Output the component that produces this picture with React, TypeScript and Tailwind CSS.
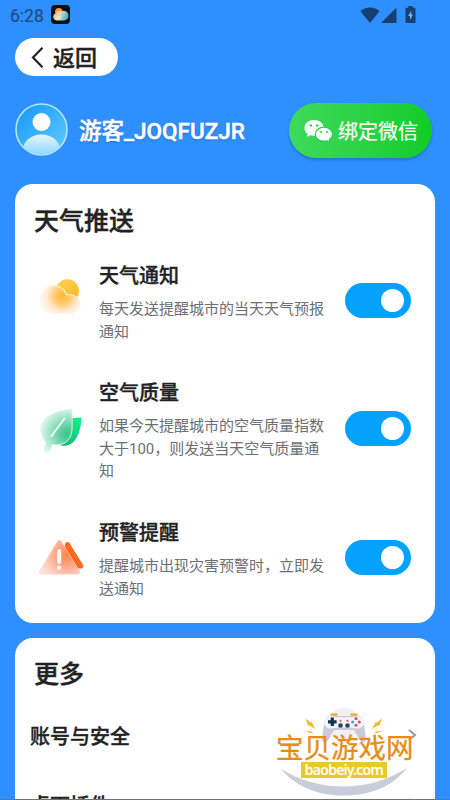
import { useState } from 'react';
import type { ReactNode } from 'react';

const FONT = "font-[Roboto,'Noto_Sans_CJK_SC',sans-serif]";

function AppIcon() {
  return (
    <svg className="ml-[7px] h-[19px] w-[19px]" viewBox="0 0 19 19">
      <defs>
        <linearGradient id="app-cloud" x1="0" y1="0" x2="1" y2="0.3">
          <stop offset="0" stopColor="#fbb978" />
          <stop offset="0.5" stopColor="#e3d8b8" />
          <stop offset="1" stopColor="#4fb9cf" />
        </linearGradient>
      </defs>
      <rect width="19" height="19" rx="4" fill="#0b1013" />
      <circle cx="7.8" cy="6.8" r="3.8" fill="#f79a35" />
      <path d="M5.5 15.5a3.6 3.6 0 0 1-.8-7 4.2 4.2 0 0 1 6-2.3A4.8 4.8 0 0 1 17.5 10.5a4.7 4.7 0 0 1-4.7 5Z" fill="url(#app-cloud)" />
      <path d="M4 12.5c2-2 4 0 6-2.5l1 4.5H6Z" fill="#fff" opacity=".35" />
    </svg>
  );
}

function StatusBar() {
  return (
    <div className="flex h-[38px] items-start pt-[5px] pr-[34px] pl-[10px] text-[#1d4c86]">
      <span className="mt-[1px] w-[34px] text-[17.5px] leading-5 [-webkit-text-stroke:0.2px]">6:28</span>
      <AppIcon />
      <div className="ml-auto flex items-start pt-[2px] text-[#173f70]">
        <svg className="h-4 w-5" viewBox="0 0 20 16" fill="currentColor">
          <path d="M10 16 .5 4.2C3.2 1.8 6.4.5 10 .5s6.8 1.3 9.5 3.7Z" />
        </svg>
        <svg className="ml-[1px] h-4 w-4" viewBox="0 0 16 16" fill="currentColor">
          <path d="M15.5.5V16H0Z" />
        </svg>
        <svg className="-mt-[1px] ml-2 h-[17px] w-[11px]" viewBox="0 0 11 17">
          <path d="M3.3 0h4.4v1.8h1.8c.6 0 1 .4 1 1V16c0 .6-.4 1-1 1h-8c-.6 0-1-.4-1-1V2.800c0-.6.4-1 1-1h1.800Z" fill="currentColor" />
          <path d="M6.200 4.800 3 10h2v4l3-5.500H6.200Z" fill="#72b4f5" />
        </svg>
      </div>
    </div>
  );
}

function Avatar() {
  return (
    <svg className="-mt-[2px] h-[53px] w-[53px]" viewBox="0 0 53 53">
      <defs>
        <linearGradient id="avatar-bg" x1="0.1" y1="0.1" x2="0.9" y2="0.9">
          <stop offset="0" stopColor="#1b9bf8" />
          <stop offset="1" stopColor="#5cc8ff" />
        </linearGradient>
        <linearGradient id="avatar-body" x1="0" y1="0" x2="0" y2="0.7">
          <stop offset="0" stopColor="#e6f6ff" />
          <stop offset="1" stopColor="#7fd2ff" />
        </linearGradient>
        <clipPath id="avatar-clip">
          <circle cx="26.5" cy="26.5" r="25" />
        </clipPath>
      </defs>
      <circle cx="26.5" cy="26.5" r="25.5" fill="url(#avatar-bg)" stroke="#b9e4ff" strokeWidth="1.6" />
      <ellipse cx="26.5" cy="48" rx="19" ry="16.5" fill="url(#avatar-body)" clipPath="url(#avatar-clip)" />
      <circle cx="26.5" cy="19" r="9" fill="#fff" />
    </svg>
  );
}

function WechatIcon() {
  return (
    <svg className="h-[24px] w-[29px]" viewBox="0 0 29 24">
      <path d="M10 1C4.5 1 .5 4.500.5 9c0 2.500 1.200 4.600 3.200 6l-.9 3 3.500-1.700c1.200.3 2.400.500 3.700.500 5.500 0 9.700-3.500 9.700-7.900S15.500 1 10 1Z" fill="#fff" />
      <path d="M20 8.200c-4.800 0-8.600 3-8.600 7s3.800 7 8.600 7c1.100 0 2.100-.2 3-.4l3 1.500-.8-2.600c2-1.300 3.300-3.200 3.300-5.500 0-4-3.700-7-8.500-7Z" fill="#fff" stroke="#2ad046" strokeWidth="1.2" />
      <circle cx="6.9" cy="6.5" r="1.3" fill="#2fd24c" />
      <circle cx="13.2" cy="6.5" r="1.3" fill="#2fd24c" />
      <circle cx="17.2" cy="13" r="1.1" fill="#2ad046" />
      <circle cx="23" cy="13" r="1.1" fill="#2ad046" />
    </svg>
  );
}

function WeatherIcon() {
  return (
    <svg className="h-[50px] w-[50px]" viewBox="0 0 50 50">
      <defs>
        <linearGradient id="sun" x1="0" y1="0" x2="1" y2="1">
          <stop offset="0" stopColor="#ffd550" />
          <stop offset="1" stopColor="#fbb52c" />
        </linearGradient>
        <radialGradient id="cloud" gradientUnits="userSpaceOnUse" cx="27.5" cy="21" r="21">
          <stop offset="0" stopColor="#ffb938" />
          <stop offset="0.35" stopColor="#ffc96a" />
          <stop offset="0.75" stopColor="#ffebd4" />
          <stop offset="1" stopColor="#fff6ec" />
        </radialGradient>
      </defs>
      <circle cx="32.3" cy="16" r="11.7" fill="url(#sun)" />
      <path d="M18 38.500C10 38.500 4.500 33 4.500 25.500S10.500 10.500 19 10.500c6 0 10.500 4 12.500 9.300 7-1 14 3.200 14 9.700 0 5-4.500 9-10 9Z" fill="url(#cloud)" />
      <path d="M14 11.300c8-2.300 15.500 2.200 17.500 8.500 5.500-.8 10.500 1.500 12.700 5" fill="none" stroke="#fff0cc" strokeWidth="1.1" />
    </svg>
  );
}

function LeafIcon() {
  return (
    <svg className="h-[50px] w-[50px]" viewBox="0 -3 50 50">
      <defs>
        <linearGradient id="leaf-back" x1="1" y1="0" x2="0.3" y2="1">
          <stop offset="0" stopColor="#10f48b" />
          <stop offset="1" stopColor="#1bb679" />
        </linearGradient>
        <radialGradient id="leaf-front" gradientUnits="userSpaceOnUse" cx="32" cy="27" r="27">
          <stop offset="0" stopColor="#35c48a" />
          <stop offset="0.4" stopColor="#72d7ac" />
          <stop offset="1" stopColor="#e2f8ef" />
        </radialGradient>
      </defs>
      <path d="M28 12.500c6-.5 12-2 18.700-2-.5 6-1.500 14-5 20-4 7.500-11 10.500-20 6.500Z" fill="url(#leaf-back)" />
      <path d="M36.500 2.500C22 3.500 6 9 6 23c0 5 2 9 5.200 11.800L9.500 42c-.5 3 4 4 5.200 1.500l2.600-6.300C26 40 36.500 35 37 23c.2-7 .5-13-.5-20.500Z" fill="url(#leaf-front)" stroke="#d0f5e5" strokeWidth="1" />
      <path d="M29.500 11.500 16.500 29" stroke="#edfff7" strokeWidth="1.9" strokeLinecap="round" />
    </svg>
  );
}

function AlertIcon() {
  return (
    <svg className="h-[50px] w-[50px]" viewBox="0 -2 50 50">
      <defs>
        <radialGradient id="alert-front" gradientUnits="userSpaceOnUse" cx="32" cy="21" r="30">
          <stop offset="0" stopColor="#fd8350" />
          <stop offset="0.4" stopColor="#fea98b" />
          <stop offset="0.75" stopColor="#fed0c0" />
          <stop offset="1" stopColor="#fee6df" />
        </radialGradient>
      </defs>
      <path d="M32.500 10.500 45.800 32H28Z" fill="#ff681f" stroke="#ff681f" strokeWidth="5" strokeLinejoin="round" />
      <path d="M24.300 8.500 42.500 38H6.800Z" fill="#ffd3c3" stroke="#ffd3c3" strokeWidth="5" strokeLinejoin="round" />
      <path d="M24.300 8.500 42.500 38H6.800Z" fill="url(#alert-front)" stroke="url(#alert-front)" strokeWidth="4" strokeLinejoin="round" />
      <path d="M24.200 17V28" stroke="#fff5f0" strokeWidth="4" strokeLinecap="round" />
      <circle cx="24.2" cy="33.7" r="2.3" fill="#fff5f0" />
    </svg>
  );
}

function Toggle() {
  const [on, setOn] = useState(true);

  return (
    <button
      onClick={() => setOn(!on)}
      className={`flex h-[35px] w-[66px] shrink-0 items-center rounded-full px-[7px] ${on ? 'justify-end bg-[#04a2fd]' : 'justify-start bg-gray-300'}`}
    >
      <span className="h-[23px] w-[23px] rounded-full bg-white" />
    </button>
  );
}

function PushRow({ icon, title, desc }: { icon: ReactNode; title: string; desc: string }) {
  return (
    <div className="flex items-center">
      <div className="w-[64px] shrink-0">{icon}</div>
      <div className="w-[228px] shrink-0 pt-[4px]">
        <h3 className="text-[20px] leading-[30px] font-medium text-[#222] [-webkit-text-stroke:0.35px]">{title}</h3>
        <p className="mt-[7px] text-[15px] leading-[22.5px] text-[#6b6f76]">{desc}</p>
      </div>
      <div className="ml-auto">
        <Toggle />
      </div>
    </div>
  );
}

function Watermark() {
  return (
    <div className="absolute top-[705px] left-[270px] h-[95px] w-[150px]">
      <svg className="absolute inset-0 h-full w-full" viewBox="0 0 150 95">
        <circle cx="74" cy="19" r="16.5" fill="#f1f1f3" />
        <path d="M11 64c38 23.500 88 23.500 126-1-16 20-38 27.500-64 27.500C48 90.500 26 82 11 64Z" fill="#c9ccda" />
        <g fill="#f0b62c">
          <path d="m35.500 13.500 5.500 4.500.5-1.500 3.500 7.500-6-4-.5 1.500Z" />
          <path d="m112 13.500-5.500 4.500-.5-1.500-4 7.500 6.500-4 .5 1.500Z" />
          <path d="m35 25.500 4.500 1 .5-.7 3.500 3-5-1.300Z" />
          <path d="m112.500 25.500-4.500 1-.5-.7-3.500 3 5-1.300Z" />
        </g>
        <path d="M60.500 9.700h7M80.500 9.700h7" stroke="#e8aa2a" strokeWidth="2.2" />
        <path d="M59 11h30c4 0 5.500 3 6 7l2 15c.5 5-4 5.500-6.500 2L84.500 25h-21L57.500 35c-2.500 3.500-7 3-6.500-2l2-15c.5-4 2-7 6-7Z" transform="translate(3.700 0) scale(.95 1)" fill="#c9cbd9" />
        <path d="M61 11.200c2.500 0 4 1 5.500 1h15c1.500 0 3-1 5.500-1 4 0 7 2.500 7 6s-3 6.300-7 6.300c-3 0-4.500-1-6.500-1h-13c-2 0-3.500 1-6.500 1-4 0-7-2.800-7-6.300s3-6 7-6Z" fill="#f5f4fa" />
        <path d="M62.300 12.500v8.600M58 16.800h8.600" stroke="#17334c" strokeWidth="3.2" />
        <circle cx="70.5" cy="20.5" r="2.3" fill="#25475d" />
        <circle cx="77.5" cy="20.5" r="2.3" fill="#25475d" />
        <circle cx="70.5" cy="15.8" r="1.1" fill="#e85569" />
        <circle cx="77.5" cy="15.8" r="1.1" fill="#e85569" />
        <circle cx="86" cy="13.6" r="1.5" fill="#e64554" />
        <circle cx="86" cy="20.2" r="1.5" fill="#e64554" />
        <circle cx="82.7" cy="16.9" r="1.5" fill="#39a7bd" />
        <circle cx="89.3" cy="16.9" r="1.5" fill="#e64554" />
      </svg>
      <div className="absolute top-[30px] left-[6px] text-[27.5px] leading-[28px] whitespace-nowrap text-[#e78b19] [-webkit-text-stroke:0.3px]">宝贝游戏网</div>
      <div className="absolute top-[57px] left-[31px] flex h-[16px] w-[86px] items-center justify-center bg-[#e9c92d] font-['Noto_Sans',sans-serif] text-[14px] leading-4 font-medium tracking-[-0.6px] text-white [-webkit-text-stroke:0.2px]">baobeiy.com</div>
    </div>
  );
}

export default function App() {
  return (
    <div className={`relative h-[800px] w-[450px] overflow-hidden bg-[#2e8fff] ${FONT}`}>
      <StatusBar />

      <div className="px-[15px]">
        <button className="flex h-[38px] w-[103px] items-center rounded-full bg-white pl-[16px] text-[#222]">
          <svg className="h-[21px] w-[13px]" viewBox="0 0 13 21" fill="none" stroke="currentColor" strokeWidth="2.2">
            <path d="M11.500.8 2 10.500l9.500 9.700" />
          </svg>
          <span className="mt-[3px] ml-[9px] text-[22px] leading-8 font-medium [-webkit-text-stroke:0.4px]">返回</span>
        </button>

        <div className="mt-[27px] flex h-[55px] items-center">
          <Avatar />
          <span className="ml-[11px] text-[22.5px] leading-8 font-medium text-white [-webkit-text-stroke:0.5px] [text-shadow:0_1px_2px_rgba(0,0,0,0.25)]">游客_JOQFUZJR</span>
          <button className="mr-[3px] ml-auto flex h-[55px] w-[143px] items-center rounded-full bg-linear-to-r from-[#3dda5c] to-[#10cc23] pl-[15px] text-white shadow-[0_2px_3px_rgba(0,0,0,0.2)]">
            <WechatIcon />
            <span className="mt-[2px] ml-[5px] text-[20px] leading-8 [-webkit-text-stroke:0.2px]">绑定微信</span>
          </button>
        </div>

        <section className="mt-[26px] h-[439px] rounded-[18px] bg-white px-[20px] pt-[20px]">
          <h2 className="-ml-px text-[25px] leading-9 font-medium text-[#222] [-webkit-text-stroke:0.4px]">天气推送</h2>
          <div className="mt-[17px] flex flex-col gap-[31.4px] pr-[4px]">
            <PushRow icon={<WeatherIcon />} title="天气通知" desc="每天发送提醒城市的当天天气预报通知" />
            <PushRow icon={<LeafIcon />} title="空气质量" desc="如果今天提醒城市的空气质量指数大于100，则发送当天空气质量通知" />
            <PushRow icon={<AlertIcon />} title="预警提醒" desc="提醒城市出现灾害预警时，立即发送通知" />
          </div>
        </section>

        <section className="mt-[15px] rounded-t-[18px] bg-white px-[15px] pt-[19px]">
          <h2 className="mb-[6px] pl-[4px] text-[25px] leading-9 font-medium text-[#222] [-webkit-text-stroke:0.4px]">更多</h2>
          {['账号与安全', '桌面插件'].map((label) => (
            <div key={label} className="flex h-[69px] items-center justify-between pt-[7px]">
              <span className="text-[20px] leading-[30px] font-medium text-[#222] [-webkit-text-stroke:0.35px]">{label}</span>
              <svg className="mr-[3px] mb-[5px] h-[12px] w-[9px]" viewBox="0 0 9 12" fill="none" stroke="#999" strokeWidth="2">
                <path d="m1 1 6 5-6 5" />
              </svg>
            </div>
          ))}
        </section>
      </div>

      <Watermark />
      <div className="absolute bottom-0 left-0 h-px w-full bg-[#74736f]" />
    </div>
  );
}
